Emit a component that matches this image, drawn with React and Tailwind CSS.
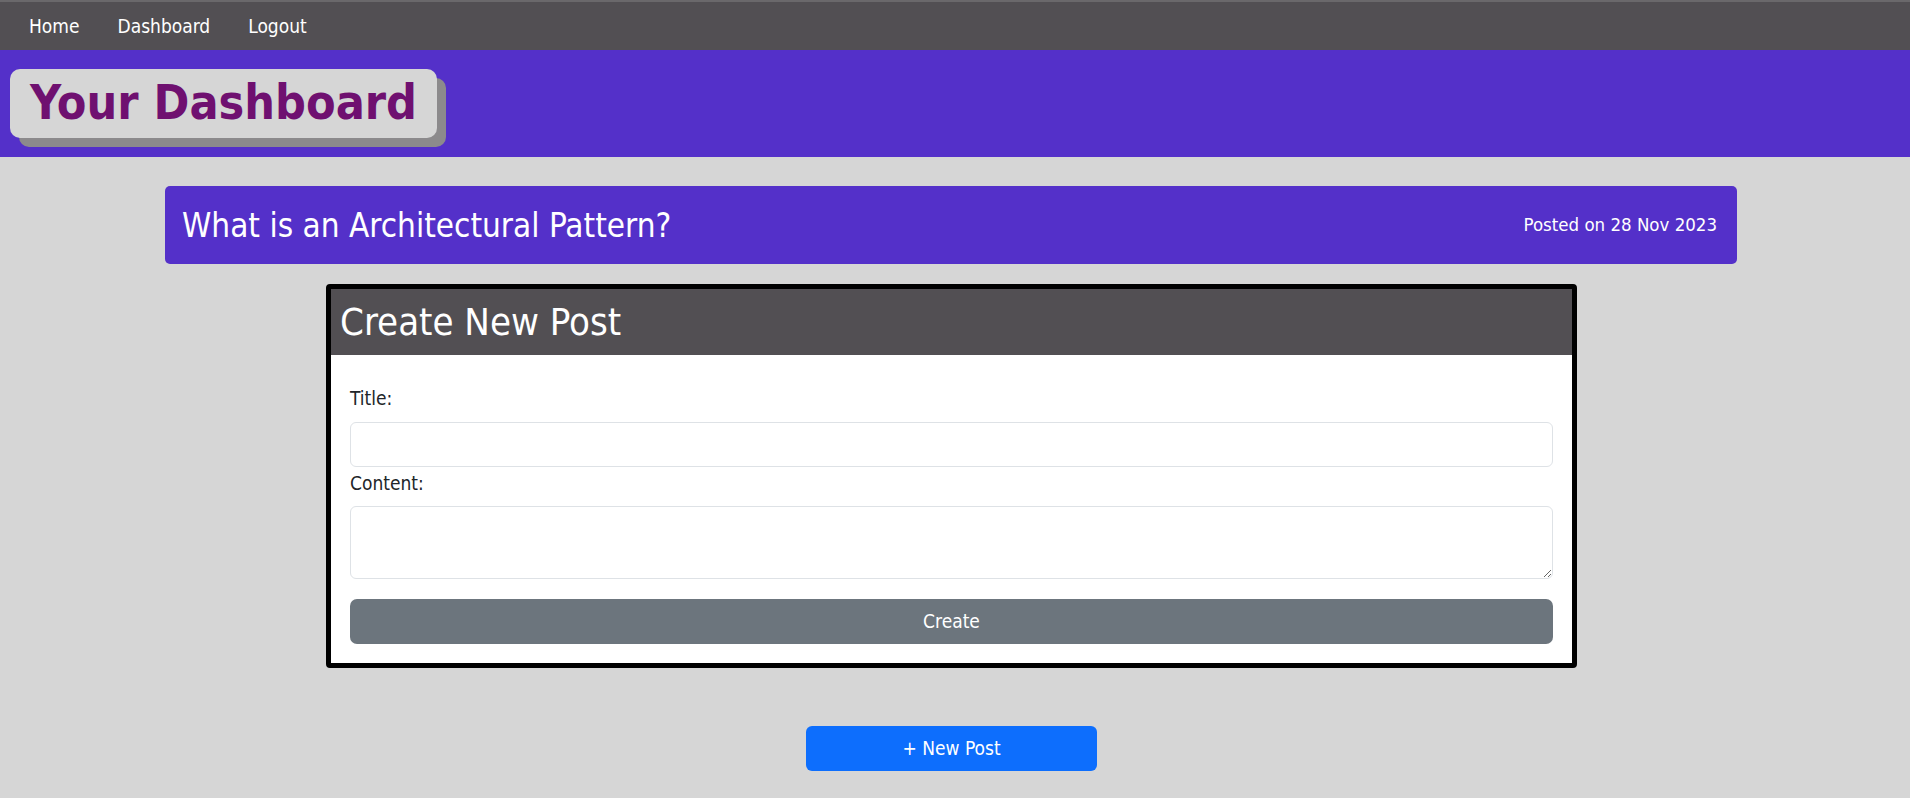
export default function App() {
  const font = "font-['DejaVu_Sans_Condensed','DejaVu_Sans',sans-serif]";
  return (
    <div className={`min-h-[798px] bg-[#d6d6d6] ${font}`}>
      {/* Nav */}
      <nav className="h-[50px] bg-[#524f53] border-t-2 border-[#6a686b] flex items-center pl-[29px] gap-[38px] text-[19px] text-white">
        <a href="#">Home</a>
        <a href="#">Dashboard</a>
        <a href="#">Logout</a>
      </nav>

      {/* Banner */}
      <header className="h-[107px] bg-[#5430c9] pt-[19px] pl-[10px]">
        <div className="w-[427px] h-[69px] rounded-[10px] bg-[#d6d6d6] shadow-[9px_9px_0_#8c8a8c] flex items-center pl-[20px]">
          <h1 className="text-[48px] font-bold text-[#6f1070] leading-none -mt-[4px]">Your Dashboard</h1>
        </div>
      </header>

      {/* Posts */}
      <main className="pt-[29px]">
        <div className="ml-[165px] w-[1572px] h-[78px] rounded-[5px] bg-[#5430c9] flex items-center justify-between pl-[17px] pr-[20px] text-white">
          <h2 className="text-[33px] leading-none">What is an Architectural Pattern?</h2>
          <span className="text-[18.5px]">Posted on 28 Nov 2023</span>
        </div>

        <div className="mt-[20px] ml-[326px] w-[1251px] border-[5px] border-black rounded-[4px] bg-white">
          <div className="h-[66px] bg-[#524f53] flex items-center px-[9px]">
            <h2 className="text-[38px] text-white leading-none">Create New Post</h2>
          </div>
          <form className="px-[19px] pt-[29px] pb-[19px] text-[19px] text-[#212529]">
            <label className="block h-[29px] leading-[29px] mb-[9px]">Title:</label>
            <input className="block w-full h-[45px] rounded-[6px] border border-[#dee2e6] bg-white" />
            <label className="block h-[29px] leading-[29px] mt-[2px] mb-[8px]">Content:</label>
            <textarea className="block w-full h-[73px] rounded-[6px] border border-[#dee2e6] bg-white resize-y" />
            <button type="button" className="mt-[20px] w-full h-[45px] rounded-[7px] bg-[#6c757d] text-white text-[19px]">
              Create
            </button>
          </form>
        </div>

        <div className="mt-[58px] ml-[806px] w-[291px]">
          <button type="button" className="w-full h-[45px] rounded-[6px] bg-[#0d6efd] text-white text-[19px]">
            + New Post
          </button>
        </div>
      </main>
    </div>
  );
}
